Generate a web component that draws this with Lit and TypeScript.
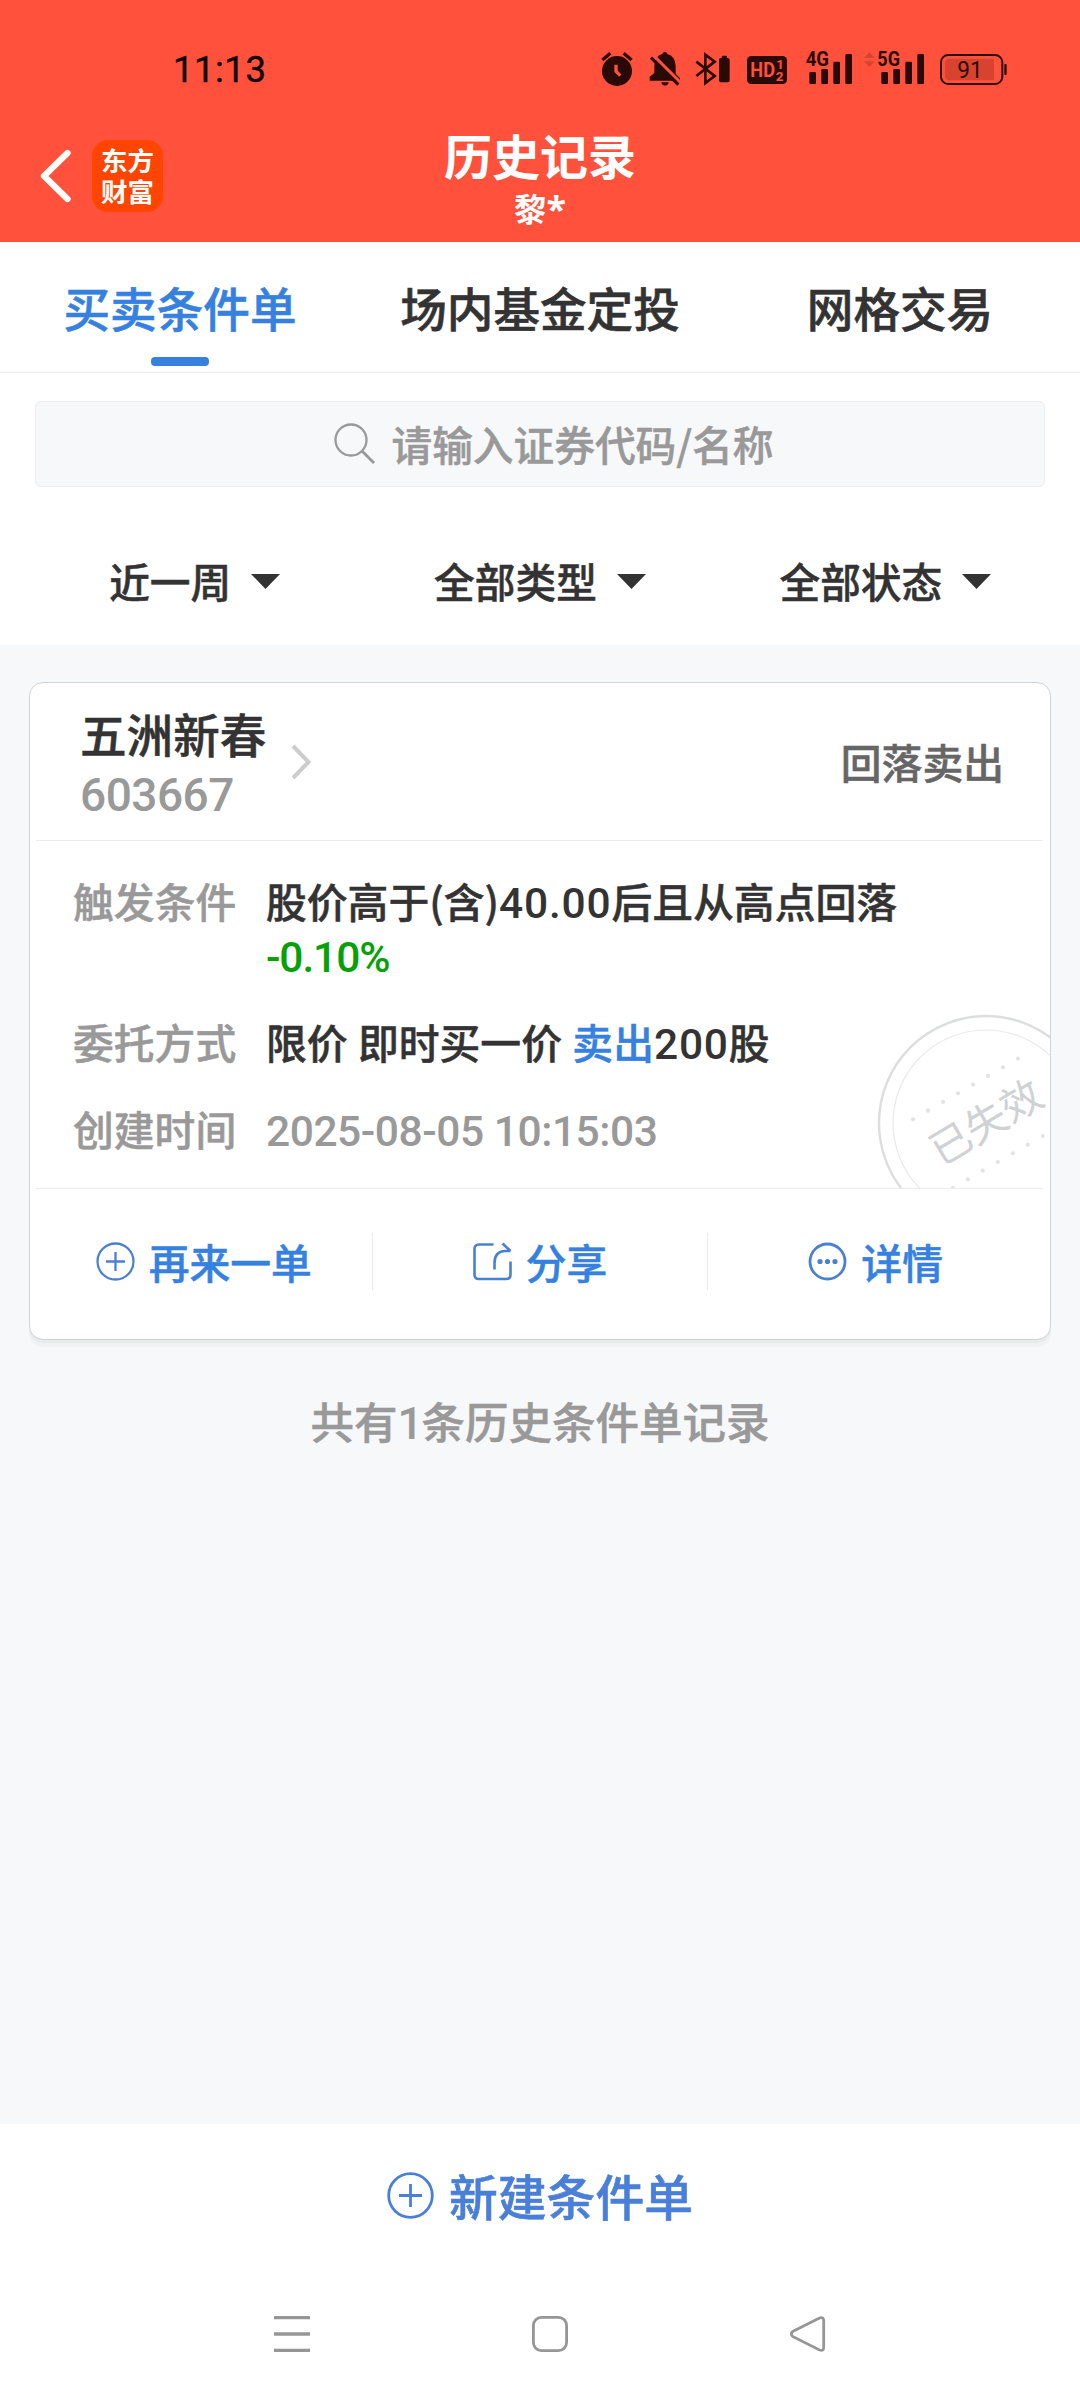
import { LitElement, html, css, svg } from "lit";
import { customElement, property } from "lit/decorators.js";

const cjk = css`"Noto Sans CJK SC", "Noto Sans", sans-serif`;

@customElement("status-bar")
class StatusBar extends LitElement {
  static styles = css`
    :host { display: flex; justify-content: space-between; height: 86px; padding: 0 68px 0 173px; box-sizing: border-box; }
    .time { font: 400 36.5px/40px Roboto, sans-serif; letter-spacing: 0.5px; color: #0d0202; padding-top: 50px; -webkit-text-stroke: 0.4px; }
    .icons { display: flex; padding-top: 52px; }
    svg { display: block; height: 34px; fill: #2a0a07; overflow: visible; }
    text { font-family: Roboto, sans-serif; }
    .line { fill: none; stroke: #2a0a07; }
    .cut { fill: none; stroke: #ff513b; }
    .faint { fill: #d8432f; }
    .w41 { width: 41px; } .w47 { width: 47px; } .w51 { width: 51px; } .w58 { width: 58px; }
    .w65 { width: 65px; } .w70 { width: 70px; } .w80 { width: 80px; }
    .net { font-size: 60px; font-weight: 700; }
    .hd { font-size: 63px; font-weight: 700; fill: #ff513b; }
    .sub { font-size: 40px; font-weight: 700; fill: #ff513b; }
    .pct { font-size: 69px; font-weight: 400; }
  `;

  private bars(x: number) {
    return svg`
      <rect x=${x} y="126" width="20" height="36" rx="4"/>
      <rect x=${x + 36} y="117" width="20" height="45" rx="4"/>
      <rect x=${x + 72} y="95" width="20" height="67" rx="4"/>
      <rect x=${x + 108} y="72" width="20" height="90" rx="4"/>`;
  }

  render() {
    return html`
      <span class="time">11:13</span>
      <div class="icons">
        <svg class="w41" viewBox="60 66 123 102">
          <circle cx="111" cy="123" r="45"/>
          <path class="line" stroke-width="10" d="M67 90 L91 70 M155 90 L131 70"/>
          <path class="cut" stroke-width="10" d="M108 104 V124 L121 137"/>
        </svg>
        <svg class="w47" viewBox="183 66 141 102">
          <path d="M247 72 q1 -6 7.500 -6 t7.500 6 q24 7 25 35 v24 l13 13 v8 H209 v-12 l14 -11 v-22 q0 -28 24 -35z"/>
          <path d="M244 157 h22 q-2 10 -11 10 t-11 -10z"/>
          <path class="cut" stroke-width="9" d="M212 68 L304 160"/>
          <path class="line" stroke-width="9" d="M213 83 L295 164"/>
        </svg>
        <svg class="w51" viewBox="324 66 153 102">
          <path class="line" stroke-width="8" d="M349 95 L404 138 L376 159 V74 L404 95 L349 138"/>
          <rect x="417" y="84" width="32" height="73" rx="6"/>
          <rect x="425" y="77" width="16" height="8" rx="3"/>
        </svg>
        <svg class="w58" viewBox="477 66 174 102">
          <rect x="501" y="78" width="120" height="84" rx="13"/>
          <text class="hd" x="511" y="142" textLength="74" lengthAdjust="spacingAndGlyphs">HD</text>
          <text class="sub" x="589" y="117">1</text>
          <text class="sub" x="587" y="152">2</text>
        </svg>
        <svg class="w65" viewBox="651 66 195 102">
          <text class="net" x="677" y="109" textLength="70" lengthAdjust="spacingAndGlyphs">4G</text>
          ${this.bars(688)}
        </svg>
        <svg class="w70" viewBox="846 66 210 102">
          <path class="faint" d="M868 67 L884 84 H852z M868 111 L884 94 H852z"/>
          <text class="net" x="892" y="109" textLength="68" lengthAdjust="spacingAndGlyphs">5G</text>
          ${this.bars(904)}
        </svg>
        <svg class="w80" viewBox="1056 66 240 102">
          <rect class="line" x="1083" y="75" width="184" height="87" rx="22" stroke-width="6"/>
          <path class="faint" d="M1109 86 H1242 V151 H1109 q-14 0 -14 -14 V100 q0 -14 14 -14z"/>
          <rect x="1273" y="102" width="7" height="33" rx="3"/>
          <text class="pct" x="1132" y="143" textLength="76" lengthAdjust="spacingAndGlyphs">91</text>
        </svg>
      </div>`;
  }
}

@customElement("title-bar")
class TitleBar extends LitElement {
  static styles = css`
    :host { display: grid; grid-template-columns: 163px 1fr 163px; height: 156px; color: #fff; font-family: ${cjk}; }
    .left { display: flex; align-items: center; gap: 20px; padding: 24px 0 0 39px; }
    svg { display: block; width: 33px; height: 54px; flex: none; }
    .logo { flex: none; width: 71px; height: 72px; border-radius: 16px; background: #ff4500; box-sizing: border-box;
      padding-top: 4px; font-size: 26.5px; line-height: 31px; font-weight: 700; text-align: center; }
    .center { text-align: center; padding-top: 37px; font-weight: 700; }
    .title { font-size: 48px; line-height: 62px; }
    .user { font-size: 32.5px; line-height: 45px; }
    .star { font: 700 36px/1 "Noto Sans", sans-serif; }
  `;
  render() {
    return html`
      <div class="left">
        <svg viewBox="0 0 33 54"><path d="M28.500 4 L5 27 L28.500 50" fill="none" stroke="#fff" stroke-width="6.300" stroke-linecap="round" stroke-linejoin="round"/></svg>
        <div class="logo">东方<br>财富</div>
      </div>
      <div class="center">
        <div class="title">历史记录</div>
        <div class="user">黎<span class="star">*</span></div>
      </div>`;
  }
}

@customElement("tab-strip")
class TabStrip extends LitElement {
  static styles = css`
    :host { display: grid; grid-template-columns: repeat(3, 1fr); height: 131px; box-sizing: border-box;
      border-bottom: 1px solid #ebecee; font: 500 46.6px/62px ${cjk}; color: #333; -webkit-text-stroke: 0.6px; }
    .tab { display: flex; flex-direction: column; align-items: center; justify-content: space-between; padding: 34px 0 6px; }
    .active { color: #3681e0; }
    .active::after { content: ""; width: 58px; height: 9px; border-radius: 4px; background: #3681e0; }
  `;
  render() {
    return html`
      <div class="tab active">买卖条件单</div>
      <div class="tab">场内基金定投</div>
      <div class="tab">网格交易</div>`;
  }
}

@customElement("filter-bar")
class FilterBar extends LitElement {
  static styles = css`
    :host { display: block; height: 272px; padding-top: 28px; box-sizing: border-box; font: 500 40.7px/54px ${cjk}; color: #333; -webkit-text-stroke: 0.5px; }
    .search { display: flex; justify-content: center; align-items: center; height: 86px; margin: 0 35px; box-sizing: border-box;
      border: 1px solid #ebecee; border-radius: 6px; background: #f7f8fa; color: #999; gap: 16px; padding-left: 28px; }
    .search svg { width: 41px; height: 41px; margin-bottom: 2px; }
    .filters { display: grid; grid-template-columns: repeat(3, 1fr); padding: 67px 22px 0; }
    .filter { display: flex; justify-content: center; align-items: center; gap: 20px; }
    .filter svg { width: 29px; height: 15px; }
    .hint { padding-bottom: 1px; }
  `;
  render() {
    return html`
      <div class="search">
        <svg viewBox="0 0 41 41" fill="none" stroke="#999" stroke-width="2.300"><circle cx="17" cy="17" r="15.500"/><path d="M28 28 L40 40" stroke-width="2.800"/></svg>
        <span class="hint">请输入证券代码/名称</span>
      </div>
      <div class="filters">
        ${["近一周", "全部类型", "全部状态"].map(
          (t) => html`<div class="filter"><span>${t}</span><svg viewBox="0 0 29 15"><path d="M0 0H29L14.500 15z" fill="#333"/></svg></div>`
        )}
      </div>`;
  }
}

@customElement("order-card")
class OrderCard extends LitElement {
  static styles = css`
    :host { display: block; height: 658px; box-sizing: border-box; border: 1px solid #d2d3d5; border-radius: 14px; background: #fff;
      box-shadow: 0 3px 0 #e8eaeb, 0 7px 0 #f1f2f4; font: 500 40.8px/54px ${cjk}; color: #333; -webkit-text-stroke: 0.5px; }
    .num { font-family: Roboto, sans-serif; font-size: 42.5px; line-height: 1; letter-spacing: 0.8px; -webkit-text-stroke: 0; }
    .head { display: flex; align-items: center; height: 158px; box-sizing: border-box; margin: 0 7px 0 6px; padding: 0 39px 0 44px; border-bottom: 1px solid #ebecee; }
    .name { font-size: 46.6px; line-height: 60px; }
    .code { font: 500 46px/42px Roboto, sans-serif; color: #999; padding: 11px 0 5px; letter-spacing: -0.5px; -webkit-text-stroke: 0; }
    .chev { width: 20px; height: 36px; margin: 0 auto 0 25px; padding-top: 1px; }
    .kind { color: #666; }
    .body { position: relative; overflow: hidden; height: 347px; box-sizing: border-box; padding: 33px 0 0 43px; }
    .row { display: grid; grid-template-columns: 193px 660px; margin-bottom: 33px; }
    .label, .muted { color: #999; }
    .mode { word-spacing: 1.2px; }
    .date { letter-spacing: -0.45px; }
    .down { color: #07a007; letter-spacing: -1.1px; }
    .sell { color: #3681e0; }
    .stamp { position: absolute; right: 0; bottom: 0; width: 174px; height: 176px; -webkit-text-stroke: 0; }
    .stamp text { font: 400 41px ${cjk}; fill: #d0d1d3; text-anchor: middle; }
    .actions { display: grid; grid-template-columns: repeat(3, 1fr); margin: 0 7px 0 6px; border-top: 1px solid #ebecee; padding-top: 44px; color: #3681e0; }
    .act { display: flex; align-items: center; justify-content: center; height: 57px; gap: 14px; }
    .act + .act { border-left: 1px solid #e8eaec; }
    .act svg { width: 39px; height: 39px; fill: none; stroke: #4a80d4; }
    .act .solid { fill: #4a80d4; stroke: none; }
  `;

  private dots(x: number, y: number, n: number) {
    return Array.from({ length: n }, (_, i) => svg`<circle cx=${x + i * 15} cy=${y - i * 8.67} r="2.1" fill="#e2e3e4"/>`);
  }

  render() {
    return html`
      <div class="head">
        <div><div class="name">五洲新春</div><div class="code">603667</div></div>
        <svg class="chev" viewBox="0 0 20 36"><path d="M2 2 L17.500 18 L2 34" fill="none" stroke="#ccc" stroke-width="4"/></svg>
        <div class="kind">回落卖出</div>
      </div>
      <div class="body">
        <div class="row"><span class="label">触发条件</span>
          <span>股价高于(含)<span class="num">40.00</span>后且从高点回落<br><span class="num down">-0.10%</span></span></div>
        <div class="row"><span class="label">委托方式</span>
          <span class="mode">限价 即时买一价 <span class="sell">卖出</span><span class="num">200</span>股</span></div>
        <div class="row"><span class="label">创建时间</span>
          <span class="muted"><span class="num date">2025-08-05 10:15:03</span></span></div>
        <svg class="stamp" viewBox="876 1012 174 176">
          <circle cx="986" cy="1123" r="107" fill="none" stroke="#dcddde" stroke-width="2.400"/>
          <circle cx="986" cy="1123" r="93" fill="none" stroke="#e8e9ea" stroke-width="1.200"/>
          ${this.dots(913, 1119.3, 8)}
          ${this.dots(952.8, 1188, 7)}
          <text x="986" y="1137" transform="rotate(-31 986 1122)">已失效</text>
        </svg>
      </div>
      <div class="actions">
        <div class="act">
          <svg viewBox="0 0 39 39" stroke-width="2.300"><circle cx="19.500" cy="19.500" r="18"/><path d="M10 19.500H29M19.500 10V29"/></svg>
          <span>再来一单</span>
        </div>
        <div class="act">
          <svg viewBox="0 0 39 39" stroke-width="2.600"><path d="M20.500 2.500H6Q1.500 2.500 1.500 7V32.500Q1.500 37 6 37H33Q37.500 37 37.500 32.500V19.500M21.500 27.500V21Q21.500 9.500 32 9H37.500M29.500 1.500L37.500 9"/></svg>
          <span>分享</span>
        </div>
        <div class="act">
          <svg viewBox="0 0 39 39" stroke-width="2.800"><circle cx="19.500" cy="19.500" r="17.500"/><g class="solid"><circle cx="12" cy="19.500" r="2.600"/><circle cx="19.500" cy="19.500" r="2.600"/><circle cx="27" cy="19.500" r="2.600"/></g></svg>
          <span>详情</span>
        </div>
      </div>`;
  }
}

@customElement("nav-keys")
class NavKeys extends LitElement {
  static styles = css`
    :host { display: flex; justify-content: space-between; padding: 0 254px 0 274px; height: 36px; }
    svg { width: 36px; height: 36px; fill: none; stroke: #969696; stroke-width: 2.8; }
    .bars { stroke-width: 3.3; }
  `;
  render() {
    return html`
      <svg class="bars" viewBox="0 0 36 36"><path d="M0 1.700H36M0 18H36M0 34.300H36"/></svg>
      <svg viewBox="0 0 36 36"><rect x="1.400" y="1.400" width="33.200" height="33.200" rx="8"/></svg>
      <svg viewBox="0 0 36 36"><path d="M2.600 15.600 L29.500 2 Q33.700 0.600 33.700 4.500 V31.500 Q33.700 35.400 29.500 34 L2.600 20.400 Q0 18 2.600 15.600z"/></svg>`;
  }
}

@customElement("app-root")
class AppRoot extends LitElement {
  @property({ type: Number }) count = 1;

  static styles = css`
    :host { display: flex; flex-direction: column; width: 1080px; height: 2400px; background: #f7f8fa; font-family: ${cjk}; overflow: hidden; }
    .top { background: #ff513b; height: 242px; }
    .panel { background: #fff; height: 403px; }
    main { flex: 1; padding: 37px 29px 0; }
    .count { margin-top: 52px; text-align: center; font: 500 43.5px/58px ${cjk}; color: #999; -webkit-text-stroke: 0.5px; }
    .n { font: 500 45px/1 Roboto, sans-serif; letter-spacing: -1.500px; -webkit-text-stroke: 0; }
    footer { height: 276px; background: #fff; display: flex; flex-direction: column; justify-content: space-between; padding: 38px 0 48px; box-sizing: border-box; }
    .create { display: flex; justify-content: center; align-items: center; gap: 15px; font: 500 48.8px/66px ${cjk}; color: #4a7fd9; -webkit-text-stroke: 0.6px; }
    .create svg { width: 47px; height: 47px; fill: none; stroke: #4a7fd9; stroke-width: 2.8; }
  `;

  render() {
    return html`
      <div class="top"><status-bar></status-bar><title-bar></title-bar></div>
      <div class="panel"><tab-strip></tab-strip><filter-bar></filter-bar></div>
      <main>
        <order-card></order-card>
        <div class="count">共有<span class="n">${this.count}</span>条历史条件单记录</div>
      </main>
      <footer>
        <div class="create">
          <svg viewBox="0 0 47 47"><circle cx="23.500" cy="23.500" r="21.800"/><path d="M12 23.500H35M23.500 12V35"/></svg>
          <span>新建条件单</span>
        </div>
        <nav-keys></nav-keys>
      </footer>`;
  }
}
